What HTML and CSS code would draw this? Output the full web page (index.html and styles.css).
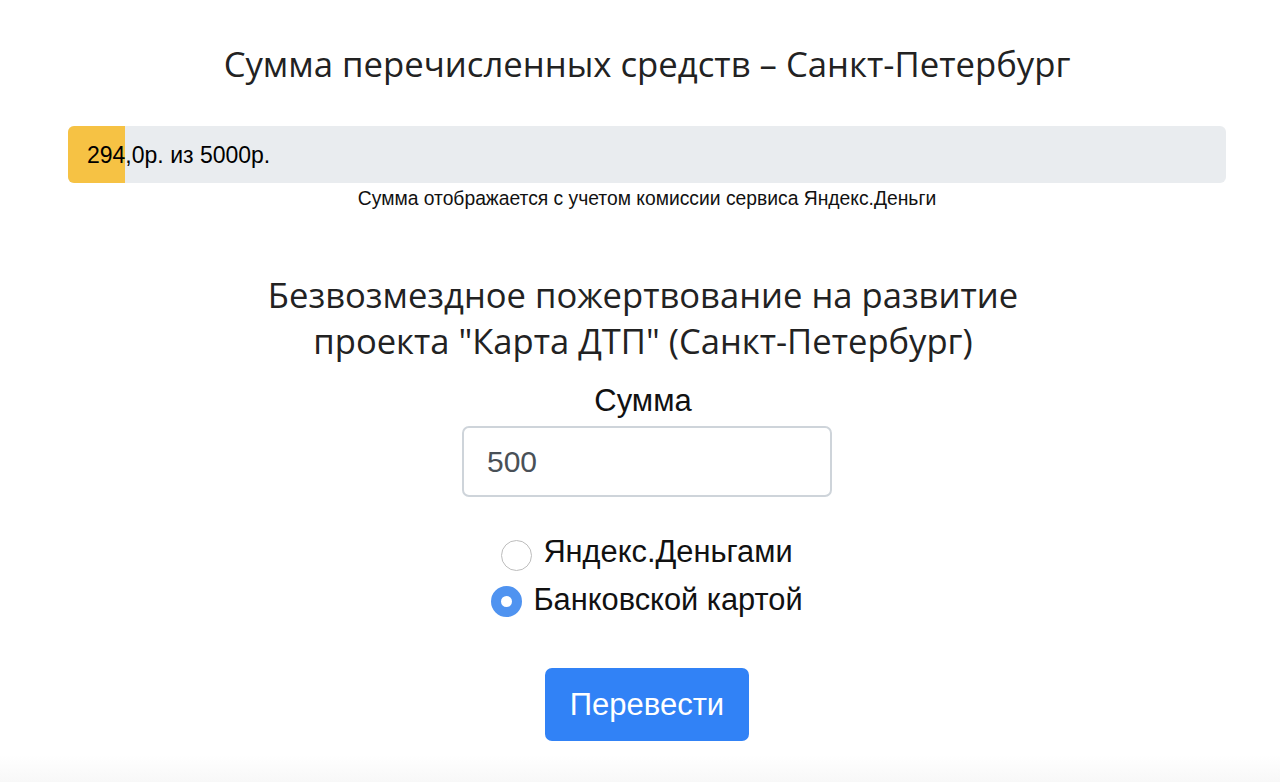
FILE: index.html
```html
<!DOCTYPE html>
<html lang="ru">
<head>
<meta charset="utf-8">
<title>Пожертвование</title>
<link rel="stylesheet" href="styles.css">
</head>
<body>
<main class="page">
  <h1 class="title">Сумма перечисленных средств – Санкт-Петербург</h1>
  <div class="progress">
    <div class="progress-fill" style="width: 57px"></div>
    <span class="progress-text">294,0р. из 5000р.</span>
  </div>
  <p class="note">Сумма отображается с учетом комиссии сервиса Яндекс.Деньги</p>

  <form class="donate">
    <h2 class="donate-title">Безвозмездное пожертвование на развитие<br>проекта "Карта ДТП" (Санкт-Петербург)</h2>
    <label class="sum-label" for="sum">Сумма</label>
    <input class="sum-input" id="sum" type="text" value="500">
    <div class="methods">
      <label class="method method-ya"><span class="radio"></span>Яндекс.Деньгами</label>
      <label class="method method-card"><span class="radio radio-on"></span>Банковской картой</label>
    </div>
    <button class="submit" type="button">Перевести</button>
  </form>
</main>
</body>
</html>
```

FILE: styles.css
```css
html, body {
  margin: 0;
  padding: 0;
}
body {
  background: linear-gradient(to bottom, #ffffff 0, #ffffff 755px, #f8f8f8 782px);
  min-height: 782px;
  font-family: "Liberation Sans", Arial, sans-serif;
  color: #212529;
}
.page {
  display: flex;
  flex-direction: column;
  align-items: center;
  padding: 0 54px 0 68px;
}
.title {
  margin: 41px 0 0;
  font-family: "Open Sans", "Noto Sans", sans-serif;
  font-weight: 400;
  font-size: 34.7px;
  line-height: 46px;
  color: #222;
}
.progress {
  position: relative;
  align-self: stretch;
  margin-top: 39px;
  height: 57px;
  background: #e9ecef;
  border-radius: 6px;
  overflow: hidden;
  display: flex;
  align-items: center;
}
.progress-fill {
  position: absolute;
  left: 0;
  top: 0;
  bottom: 0;
  background: #f6c244;
}
.progress-text {
  position: relative;
  padding-left: 19px;
  padding-top: 2px;
  font-size: 23px;
  color: #000;
}
.note {
  margin: 5px 0 0;
  font-size: 19.3px;
  line-height: 22px;
  color: #111;
}
.donate {
  display: flex;
  flex-direction: column;
  align-items: center;
}
.donate-title {
  margin: 62px 8px 0 0;
  text-align: center;
  font-family: "Open Sans", "Noto Sans", sans-serif;
  font-weight: 400;
  font-size: 34.6px;
  line-height: 46px;
  color: #222;
}
.sum-label {
  margin: 19px 8px 0 0;
  font-size: 31px;
  line-height: 36px;
  color: #111;
}
.sum-input {
  margin-top: 7px;
  box-sizing: border-box;
  width: 370px;
  height: 71px;
  padding: 0 23px;
  border: 2px solid #ced4da;
  border-radius: 7px;
  font-family: "Liberation Sans", Arial, sans-serif;
  font-size: 30px;
  color: #495057;
  outline: none;
}
.methods {
  margin-top: 36px;
  display: flex;
  flex-direction: column;
  align-items: center;
  gap: 10px;
}
.method {
  display: flex;
  align-items: center;
  font-size: 30.8px;
  line-height: 38px;
  color: #111;
}
.radio {
  box-sizing: border-box;
  width: 31px;
  height: 31px;
  margin-right: 11px;
  margin-top: 6px;
  border-radius: 50%;
  border: 1.5px solid #bdbdbd;
  background: #fff;
}
.radio-on {
  border: 10px solid #4f93f0;
  background: #fff;
  margin-top: 2px;
}
.submit {
  margin-top: 49px;
  width: 204px;
  height: 73px;
  border: none;
  border-radius: 7px;
  background: #3182f6;
  color: #fff;
  font-family: "Liberation Sans", Arial, sans-serif;
  font-size: 31px;
}
```
